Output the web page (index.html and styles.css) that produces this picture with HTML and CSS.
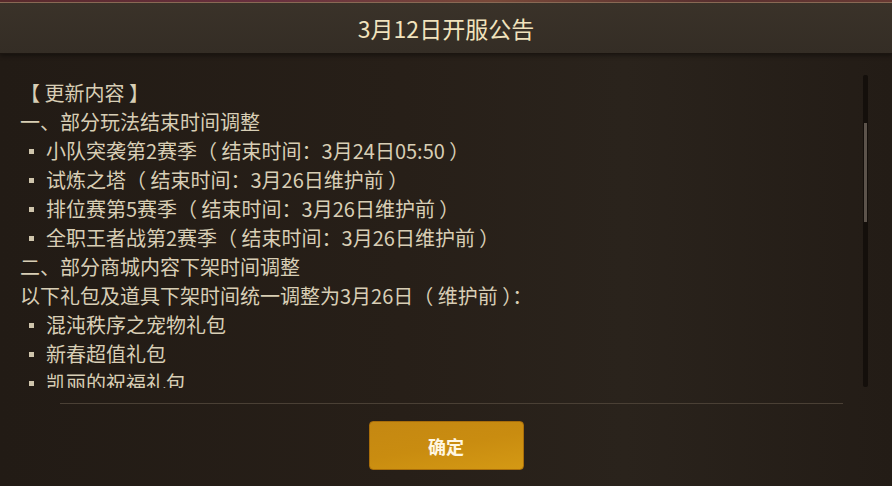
FILE: index.html
```html
<!DOCTYPE html>
<html>
<head>
    <meta charset="utf-8">
    <title>3月12日开服公告</title>
    <link rel="stylesheet" href="styles.css">
</head>
<body>
    <div class="dialog">
        <div class="top-strip"></div>
        <div class="dialog-header">3月12日开服公告</div>

        <div class="dialog-body">
            <div class="notice-scroll">
                <p class="line">【 更新内容 】</p>
                <p class="line">一、部分玩法结束时间调整</p>
                <p class="line item">小队突袭第2赛季（ 结束时间：3月24日05:50 ）</p>
                <p class="line item">试炼之塔（ 结束时间：3月26日维护前 ）</p>
                <p class="line item">排位赛第5赛季（ 结束时间：3月26日维护前 ）</p>
                <p class="line item">全职王者战第2赛季（ 结束时间：3月26日维护前 ）</p>
                <p class="line">二、部分商城内容下架时间调整</p>
                <p class="line">以下礼包及道具下架时间统一调整为3月26日（ 维护前 ）：</p>
                <p class="line item">混沌秩序之宠物礼包</p>
                <p class="line item">新春超值礼包</p>
                <p class="line item">凯丽的祝福礼包</p>
            </div>
            <!-- 滚动条 -->
            <div class="scrollbar"><div class="scrollbar-thumb"></div></div>
        </div>

        <div class="divider"></div>

        <div class="dialog-footer">
            <button class="ok-btn">确定</button>
        </div>
    </div>
</body>
</html>
```

FILE: styles.css
```css
/* 公告弹窗 */
body {
    margin: 0;
    font-family: "Noto Sans CJK SC", "Noto Sans", sans-serif;
    background: #231c16;
}

.dialog {
    width: 892px;
    height: 486px;
    overflow: hidden;
    background: linear-gradient(90deg, #221b15 0%, #271f18 45%, #2a231c 70%, #231c16 100%);
}

.top-strip {
    height: 2px;
    background: linear-gradient(90deg, #5a2a2c 0%, #6a3040 30%, #7a4a3a 55%, #5a3030 80%, #6a3a34 100%);
    border-bottom: 1px solid #8e6e58;
}

.dialog-header {
    height: 50px;
    display: flex;
    align-items: center;
    justify-content: center;
    font-size: 23px;
    color: #f1e3bd;
    background: linear-gradient(180deg, #3a3229 0%, #342d25 100%);
    border-bottom: 1px solid #1b1510;
    box-shadow: 0 2px 4px rgba(0, 0, 0, 0.35);
}

.dialog-body {
    position: relative;
    padding: 21px 20px 0;
}

.notice-scroll {
    padding-top: 3px;
    height: 310px;
    overflow: hidden;
}

.line {
    margin: 0;
    height: 29px;
    line-height: 29px;
    font-size: 20px;
    color: #d8ceb5;
    white-space: nowrap;
}

.line.item::before {
    content: "";
    display: inline-block;
    width: 5px;
    height: 5px;
    margin: 0 12px 0 9px;
    vertical-align: middle;
    position: relative;
    top: -2px;
    background: #cfc5ac;
}

.scrollbar {
    position: absolute;
    top: 21px;
    right: 24px;
    width: 5px;
    height: 312px;
    border-radius: 2px;
    background: #140f0b;
}

.scrollbar-thumb {
    position: absolute;
    top: 48px;
    left: 1px;
    width: 3px;
    height: 99px;
    background: #5c534b;
}

.divider {
    margin: 15px 49px 0 60px;
    height: 1px;
    background: #4a4035;
}

.dialog-footer {
    display: flex;
    justify-content: center;
    padding-top: 17px;
}

.ok-btn {
    width: 155px;
    height: 49px;
    border: 1px solid #a86d0a;
    border-radius: 4px;
    background: linear-gradient(170deg, #c58812 0%, #c98c10 50%, #d49914 100%);
    color: #fff6e2;
    font-family: "Noto Sans CJK SC", sans-serif;
    font-size: 18px;
    font-weight: bold;
    cursor: pointer;
}
```
